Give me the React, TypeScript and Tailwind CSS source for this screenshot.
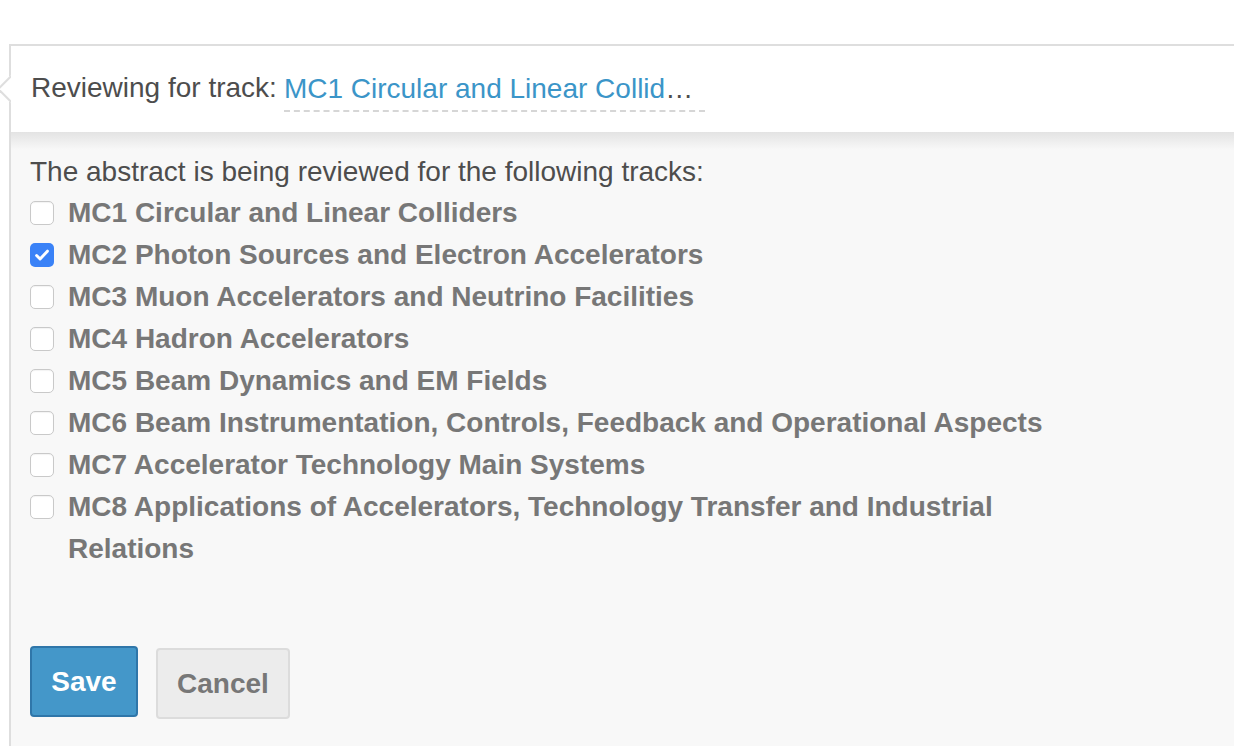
const tracks = [
  { id: 'mc1', label: 'MC1 Circular and Linear Colliders', checked: false },
  { id: 'mc2', label: 'MC2 Photon Sources and Electron Accelerators', checked: true },
  { id: 'mc3', label: 'MC3 Muon Accelerators and Neutrino Facilities', checked: false },
  { id: 'mc4', label: 'MC4 Hadron Accelerators', checked: false },
  { id: 'mc5', label: 'MC5 Beam Dynamics and EM Fields', checked: false },
  { id: 'mc6', label: 'MC6 Beam Instrumentation, Controls, Feedback and Operational Aspects', checked: false },
  { id: 'mc7', label: 'MC7 Accelerator Technology Main Systems', checked: false },
  {
    id: 'mc8',
    label: 'MC8 Applications of Accelerators, Technology Transfer and Industrial Relations',
    checked: false,
  },
]

function Checkbox({ checked }: { checked: boolean }) {
  if (checked) {
    return (
      <span className="mt-[9px] flex h-[24px] w-[24px] shrink-0 items-center justify-center rounded-[5px] bg-[#3a82f7]">
        <svg width="18" height="18" viewBox="0 0 16 16" fill="none" aria-hidden="true">
          <path d="M3.2 8.4l3.1 3.2L12.8 4.6" stroke="white" strokeWidth="2.6" strokeLinecap="round" strokeLinejoin="round" />
        </svg>
      </span>
    )
  }
  return (
    <span className="mt-[9px] block h-[24px] w-[24px] shrink-0 rounded-[5px] border border-[#c9c9c9] bg-white shadow-[inset_0_1px_1px_rgba(0,0,0,0.05)]" />
  )
}

export default function App() {
  return (
    <div className="flex min-h-[746px] flex-col bg-white pt-[44px] pl-[9px] font-['Liberation_Sans',Arial,sans-serif]">
      <div className="relative flex flex-1 flex-col border-t-2 border-l-2 border-[#dedede]">
        {/* arrow */}
        <span className="absolute left-[-10px] top-[33px] h-[20px] w-[20px] rotate-45 border-b-2 border-l-2 border-[#dedede] bg-white" />

        <div className="relative flex h-[86px] items-center bg-white pl-[20px] text-[28px] text-[#4d4d4d]">
          <span className="-mt-[2px]">Reviewing for track:</span>
          <span className="ml-[7px] mt-[2px] border-b-2 border-dashed border-[#d6d6d6] pr-[12px]">
            <span className="text-[#3b95c8]">MC1 Circular and Linear Collid</span>
            <span>…</span>
          </span>
        </div>

        <div className="flex-1 bg-[#f8f8f8] bg-[linear-gradient(to_bottom,#e3e3e3_0px,#f8f8f8_18px)] pl-[19px] pt-[19px] pb-[28px]">
          <p className="text-[28px] leading-[42px] text-[#4d4d4d]">The abstract is being reviewed for the following tracks:</p>
          <ul className="-mt-[1px] w-[1050px]">
            {tracks.map((t) => (
              <li key={t.id} className="flex items-start gap-[14px]">
                <Checkbox checked={t.checked} />
                <span className="text-[28px] font-bold leading-[42px] text-[#777777]">{t.label}</span>
              </li>
            ))}
          </ul>

          <div className="mt-[76px] flex items-start gap-[18px]">
            <button className="h-[71px] w-[108px] rounded-[4px] border-2 border-[#2f76a9] bg-[#4497c9] text-[28px] font-bold text-white">
              Save
            </button>
            <button className="mt-[2px] h-[71px] w-[134px] rounded-[4px] border-2 border-[#dcdcdc] bg-[#ececec] text-[28px] font-bold text-[#777777]">
              Cancel
            </button>
          </div>
        </div>
      </div>
    </div>
  )
}
